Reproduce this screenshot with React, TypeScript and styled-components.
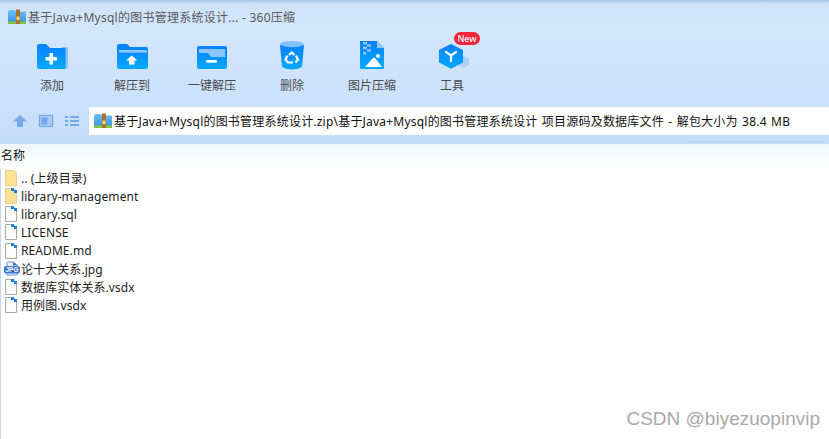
import React from 'react'
import styled, { createGlobalStyle } from 'styled-components'

const GlobalStyle = createGlobalStyle`
    html, body {
        margin: 0;
        padding: 0;
        background: #fff;
    }
    body {
        font-family: "Noto Sans", "Noto Sans CJK SC", sans-serif;
    }
`

const Window = styled.div`
    width: 829px;
    height: 439px;
    overflow: hidden;
    display: flex;
    flex-direction: column;
    position: relative;
`

const Header = styled.div`
    height: 144px;
    flex: none;
    display: flex;
    flex-direction: column;
    background: linear-gradient(180deg, #a9c6e6 0, #cfe3fa 4px, #d3e6fc 30px, #cde2fb 90px, #c4ddf8 100%);
`

const TitleBar = styled.div`
    height: 24px;
    margin-top: 5px;
    padding-left: 8px;
    display: flex;
    align-items: center;
    gap: 2px;
    flex: none;
    font-size: 12px;
    letter-spacing: 0.25px;
    color: #5a5a5a;
`

const Toolbar = styled.div`
    display: flex;
    padding: 11px 0 0 12px;
    height: 78px;
    box-sizing: border-box;
    flex: none;
`

const ToolItem = styled.div`
    width: 80px;
    display: flex;
    flex-direction: column;
    align-items: center;
    gap: 5px;
    position: relative;
    font-size: 12px;
    line-height: 17px;
    color: #4a4a4a;
`

const ToolIcon = styled.svg`
    width: 36px;
    height: 32px;
    display: block;
`

const NewBadge = styled.span`
    position: absolute;
    top: -8px;
    left: 42px;
    width: 26px;
    height: 13px;
    border-radius: 7px;
    background: #f5233c;
    color: #fff;
    font-size: 9px;
    font-weight: 500;
    line-height: 13px;
    text-align: center;
`

const NavRow = styled.div`
    height: 28px;
    flex: none;
    display: flex;
    align-items: center;
`

const NavIcons = styled.div`
    width: 89px;
    flex: none;
    display: flex;
    align-items: center;
    gap: 10px;
    padding-left: 12px;
    box-sizing: border-box;
`

const Address = styled.div`
    flex: 1;
    height: 28px;
    background: #fff;
    display: flex;
    align-items: center;
    gap: 2px;
    padding-left: 5px;
    font-size: 12px;
    letter-spacing: 0.21px;
    word-spacing: 1px;
    color: #111;
    white-space: nowrap;
`

const HeaderRule = styled.div`
    margin: 6px 0 0 688px;
    width: 137px;
    height: 1px;
    flex: none;
    background: #b7d2ef;
`

const ColumnHead = styled.div`
    height: 25px;
    flex: none;
    padding: 4px 0 0 1px;
    box-sizing: border-box;
    font-size: 12px;
    line-height: 16px;
    color: #111;
    background: linear-gradient(180deg, #f1f7fe 0, #ffffff 100%);
`

const FileList = styled.div`
    flex: 1;
    border-left: 1px solid #bcd8f6;
    display: flex;
    flex-direction: column;
`

const FileRow = styled.div`
    height: 18.15px;
    flex: none;
    display: flex;
    align-items: center;
    gap: 1px;
    padding-left: 3px;
    font-size: 12px;
    letter-spacing: 0.08px;
    color: #1c1c1c;
    white-space: nowrap;
`

const FileGlyph = styled.svg`
    width: 16px;
    height: 18px;
    flex: none;
    display: block;
`

const Watermark = styled.div`
    position: absolute;
    right: 9px;
    bottom: 9px;
    font-family: "Liberation Sans", sans-serif;
    font-size: 19px;
    line-height: 22px;
    color: #a9a9a9;
`

const Defs = () => (
    <svg width="0" height="0" style={{ position: 'absolute' }}>
        <defs>
            <linearGradient id="blue" x1="0" y1="0" x2="0" y2="1">
                <stop offset="0" stopColor="#0a80fd" />
                <stop offset="1" stopColor="#00aaff" />
            </linearGradient>
            <linearGradient id="archive" x1="0" y1="0" x2="0" y2="1">
                <stop offset="0" stopColor="#6cc0f5" />
                <stop offset="1" stopColor="#3d97e4" />
            </linearGradient>
        </defs>
    </svg>
)

const ArchiveSvg = styled.svg`
    width: 18px;
    height: 16px;
    flex: none;
    display: block;
`

const ArchiveIcon = () => (
    <ArchiveSvg viewBox="0 0 18 16">
        <path d="M0 3 Q0 1 2 1 H7 L8 2.5 H17 Q18 2.5 18 3.5 V13 H0Z" fill="url(#archive)" />
        <rect x="0" y="12.5" width="18" height="2.5" fill="#86c440" />
        <rect x="8" y="0.5" width="4" height="14.5" fill="#a9712a" />
        <rect x="8.5" y="7.5" width="3" height="3.5" fill="#f4d674" />
    </ArchiveSvg>
)

const AddIcon = () => (
    <ToolIcon viewBox="0 0 36 32">
        <path d="M14 7 H32 Q34 7 34 9 V27 Q34 29 32 29 H28 V7Z" fill="#86c3fd" />
        <path d="M3 6 Q3 4 5 4 H12 L16 8 H31.5 V29 H5 Q3 29 3 27Z" fill="url(#blue)" />
        <path d="M15.5 13 H19 V17 H23 V20.5 H19 V24.5 H15.5 V20.5 H11.5 V17 H15.5Z" fill="#fff" />
    </ToolIcon>
)

const ExtractIcon = () => (
    <ToolIcon viewBox="0 0 36 32">
        <path d="M3 6 Q3 4 5 4 H13 L16 7 H32 Q34 7 34 9 V27 Q34 29 32 29 H5 Q3 29 3 27Z" fill="url(#blue)" />
        <path d="M5 10 H33 V12.7 H5Z" fill="#8cc6fd" />
        <path d="M17.7 15.5 L23.3 20.5 H20.5 V24.5 H15 V20.5 H12Z" fill="#fff" />
    </ToolIcon>
)

const OneClickIcon = () => (
    <ToolIcon viewBox="0 0 36 32">
        <path d="M3 8 Q3 6 5 6 H31 Q33 6 33 8 V27 Q33 29 31 29 H5 Q3 29 3 27Z" fill="url(#blue)" />
        <path d="M5 9 H31 V17 H17 L14 13 H5Z" fill="#8cc6fd" />
        <rect x="12" y="20" width="11" height="2.7" rx="1" fill="#fff" />
    </ToolIcon>
)

const TrashIcon = () => (
    <ToolIcon viewBox="0 0 36 32">
        <ellipse cx="18" cy="4.5" rx="12" ry="3.5" fill="#85c1fd" />
        <path d="M6 5 Q18 9.5 30 5 L28 27 Q18 32 8 27Z" fill="url(#blue)" />
        <g fill="none" stroke="#fff" strokeWidth="2.2">
            <path d="M15 15 L17.8 12.5 L20.5 15" />
            <path d="M22 15.5 L24 19.5 L21.5 22.5" />
            <path d="M13.5 15.5 L11.5 19.5 L14 22.5 H19" />
        </g>
    </ToolIcon>
)

const ImageZipIcon = () => (
    <ToolIcon viewBox="0 0 36 32">
        <path d="M6 1 H23 L30 8 V28 Q30 29 29 29 H7 Q6 29 6 28Z" fill="url(#blue)" />
        <path d="M23 1 L30 8 H23Z" fill="#8cc6fd" />
        <path d="M9 2 h4 v2.4 h-4Z M13 4.4 h4 v2.4 h-4Z M9 6.8 h4 v2.4 h-4Z M13 9.2 h4 v2.4 h-4Z M9 12 h3 v2.4 h-3Z" fill="#8cc6fd" />
        <circle cx="24" cy="16" r="2" fill="#fff" />
        <path d="M11 27 L19 18 Q20 17 21 18 L28 27Z" fill="#fff" />
    </ToolIcon>
)

const ToolsIcon = () => (
    <ToolIcon viewBox="0 0 36 32">
        <path d="M30 16 L35 19 V25 L30 28 L24 25 V19Z" fill="#a9d2fb" />
        <path d="M17 4 L29 10 V22.5 L17 28.7 L5 22.5 V10Z" fill="url(#blue)" />
        <path d="M12 12 L17 15.5 L22 12 M17 15.5 V21" fill="none" stroke="#fff" strokeWidth="2.2" strokeLinecap="round" />
    </ToolIcon>
)

const NavGlyph = styled.svg`
    width: 16px;
    height: 16px;
    flex: none;
    display: block;
`

const UpIcon = () => (
    <NavGlyph viewBox="0 0 16 16">
        <path d="M8 2 L15 8.5 H11 V14 H5 V8.5 H1Z" fill="#76a9ec" />
    </NavGlyph>
)

const PaneIcon = () => (
    <NavGlyph viewBox="0 0 16 16">
        <rect x="1.5" y="2.5" width="13" height="11" fill="#a9cbf3" stroke="#76a9ec" strokeWidth="1.2" />
        <rect x="3.5" y="4.5" width="6" height="7" fill="#76a9ec" />
    </NavGlyph>
)

const ListIcon = () => (
    <NavGlyph viewBox="0 0 16 16">
        <path d="M1 3h3v2H1Z M6 3h9v2H6Z M1 7h3v2H1Z M6 7h9v2H6Z M1 11h3v2H1Z M6 11h9v2H6Z" fill="#76a9ec" />
    </NavGlyph>
)

const CornerMark = () => (
    <path d="M7 1 H10 V3 H13 V6 H10 V4 H7Z" fill="#1f7fdc" />
)

const FolderGlyph = ({ shortcut }: { shortcut?: boolean }) => (
    <FileGlyph viewBox="0 0 16 18">
        <path d="M1.5 1.5 H10 L12.5 4 V16.5 H1.5Z" fill="#fde396" stroke="#e9cf86" strokeWidth="1" />
        {shortcut && <CornerMark />}
    </FileGlyph>
)

const DocGlyph = () => (
    <FileGlyph viewBox="0 0 16 18">
        <path d="M1.5 1.5 H9 L12.5 5 V16.5 H1.5Z" fill="#fbfbfb" stroke="#a9a9a9" strokeWidth="1" />
        <CornerMark />
    </FileGlyph>
)

const JpgGlyph = () => (
    <FileGlyph viewBox="1 0 16 18">
        <path d="M4 8 V3 Q4 2 5 2 H10 L14 5 V8 M14 13 V15 H4 V13" fill="#eef3fb" stroke="#6d94d2" strokeWidth="1" />
        <path d="M10 1.5 L14.5 5.5 H10Z" fill="#3f75cc" />
        <rect x="1" y="6" width="16" height="7.5" rx="2" fill="#3f75cc" />
        <text x="9" y="12.2" textAnchor="middle" fontSize="6.4" fontWeight="700" fill="#fff" fontFamily="Liberation Sans, sans-serif">JPG</text>
    </FileGlyph>
)

const files: { name: string; icon: React.ReactNode }[] = [
    { name: '.. (上级目录)', icon: <FolderGlyph /> },
    { name: 'library-management', icon: <FolderGlyph shortcut /> },
    { name: 'library.sql', icon: <DocGlyph /> },
    { name: 'LICENSE', icon: <DocGlyph /> },
    { name: 'README.md', icon: <DocGlyph /> },
    { name: '论十大关系.jpg', icon: <JpgGlyph /> },
    { name: '数据库实体关系.vsdx', icon: <DocGlyph /> },
    { name: '用例图.vsdx', icon: <DocGlyph /> },
]

const tools: { label: string; icon: React.ReactNode; isNew?: boolean }[] = [
    { label: '添加', icon: <AddIcon /> },
    { label: '解压到', icon: <ExtractIcon /> },
    { label: '一键解压', icon: <OneClickIcon /> },
    { label: '删除', icon: <TrashIcon /> },
    { label: '图片压缩', icon: <ImageZipIcon /> },
    { label: '工具', icon: <ToolsIcon />, isNew: true },
]

export default function App() {
    return (
        <Window>
            <GlobalStyle />
            <Defs />
            <Header>
                <TitleBar>
                    <ArchiveIcon />
                    基于Java+Mysql的图书管理系统设计... - 360压缩
                </TitleBar>
                <Toolbar>
                    {tools.map(tool => (
                        <ToolItem key={tool.label}>
                            {tool.icon}
                            {tool.isNew && <NewBadge>New</NewBadge>}
                            {tool.label}
                        </ToolItem>
                    ))}
                </Toolbar>
                <NavRow>
                    <NavIcons>
                        <UpIcon />
                        <PaneIcon />
                        <ListIcon />
                    </NavIcons>
                    <Address>
                        <ArchiveIcon />
                        基于Java+Mysql的图书管理系统设计.zip\基于Java+Mysql的图书管理系统设计 项目源码及数据库文件 - 解包大小为 38.4 MB
                    </Address>
                </NavRow>
                <HeaderRule />
            </Header>
            <ColumnHead>名称</ColumnHead>
            <FileList>
                {files.map(file => (
                    <FileRow key={file.name}>
                        {file.icon}
                        {file.name}
                    </FileRow>
                ))}
            </FileList>
            <Watermark>CSDN @biyezuopinvip</Watermark>
        </Window>
    )
}
